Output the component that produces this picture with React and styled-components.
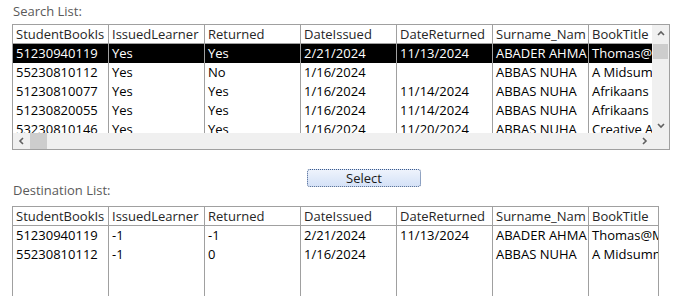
import React from 'react';
import styled, { createGlobalStyle } from 'styled-components';

const GlobalStyle = createGlobalStyle`
  html, body {
    margin: 0;
    padding: 0;
    background: #ffffff;
  }
  body {
    font-family: "Open Sans", "Liberation Sans", sans-serif;
    font-size: 13px;
    color: #000;
  }
`;

const columns = ['StudentBookIs', 'IssuedLearner', 'Returned', 'DateIssued', 'DateReturned', 'Surname_Nam', 'BookTitle'];

const searchRows = [
  ['51230940119', 'Yes', 'Yes', '2/21/2024', '11/13/2024', 'ABADER AHMA', 'Thomas@Midnight'],
  ['55230810112', 'Yes', 'No', '1/16/2024', '', 'ABBAS NUHA', 'A Midsummer'],
  ['51230810077', 'Yes', 'Yes', '1/16/2024', '11/14/2024', 'ABBAS NUHA', 'Afrikaans'],
  ['51230820055', 'Yes', 'Yes', '1/16/2024', '11/14/2024', 'ABBAS NUHA', 'Afrikaans'],
  ['53230810146', 'Yes', 'Yes', '1/16/2024', '11/20/2024', 'ABBAS NUHA', 'Creative Arts'],
];

const destRows = [
  ['51230940119', '-1', '-1', '2/21/2024', '11/13/2024', 'ABADER AHMA', 'Thomas@Midnight'],
  ['55230810112', '-1', '0', '1/16/2024', '', 'ABBAS NUHA', 'A Midsummer'],
];

const Page = styled.div`
  padding: 0 0 0 12px;
`;

const Caption = styled.div`
  height: 24px;
  line-height: 22px;
  padding-left: 1px;
  color: #5a5a5a;
  white-space: nowrap;
`;

const Frame = styled.div`
  width: ${p => p.width}px;
  height: ${p => p.height}px;
  border: 1px solid #a0a0a0;
  display: grid;
  grid-template-columns: 1fr ${p => (p.scroll ? '17px' : '0px')};
  grid-template-rows: 1fr ${p => (p.scroll ? '16px' : '0px')};
  overflow: hidden;
  box-sizing: content-box;
`;

const Sheet = styled.div`
  overflow: hidden;
  display: flex;
  flex-direction: column;
`;

const Row = styled.div`
  display: flex;
  height: ${p => (p.header ? 18 : 19)}px;
  flex: none;
  background: ${p => (p.selected ? '#000' : 'transparent')};
  color: ${p => (p.selected ? '#fff' : '#000')};
  border-bottom: ${p => (p.header ? '1px solid #a0a0a0' : 'none')};
`;

const Filler = styled.div`
  display: flex;
  flex: 1;
`;

const Cell = styled.div`
  flex: none;
  width: 96px;
  box-sizing: border-box;
  border-right: 1px solid #a0a0a0;
  padding: 0 3px;
  line-height: ${p => (p.header ? 18 : 19)}px;
  white-space: nowrap;
  overflow: hidden;
  color: ${p => (p.header ? '#262626' : 'inherit')};
`;

const VScroll = styled.div`
  background: #f0f0f0;
  display: flex;
  flex-direction: column;
  align-items: center;
`;

const HScroll = styled.div`
  grid-column: 1 / 3;
  background: #f0f0f0;
  display: flex;
  align-items: center;
`;

const Arrow = styled.div`
  width: 17px;
  height: ${p => (p.vertical ? '17px' : '16px')};
  display: flex;
  align-items: center;
  justify-content: center;
  flex: none;
`;

const Thumb = styled.div`
  background: #cdcdcd;
  flex: none;
  width: ${p => (p.vertical ? '15px' : '17px')};
  height: ${p => (p.vertical ? '15px' : '16px')};
  margin: ${p => (p.vertical ? '2px 0 0' : '0')};
`;

const Spacer = styled.div`
  flex: 1;
`;

const Middle = styled.div`
  display: grid;
  grid-template-columns: 295px auto;
  height: 56px;
`;

const DestCaption = styled(Caption)`
  align-self: end;
  line-height: 20px;
  height: 26px;
`;

const SelectButton = styled.button`
  align-self: start;
  justify-self: start;
  margin-top: 19px;
  width: 114px;
  height: 18px;
  padding: 0;
  border: 1px dotted #3d5a8a;
  border-radius: 3px;
  background: linear-gradient(#eef3fc, #d5e2f7);
  font-family: "Open Sans", "Liberation Sans", sans-serif;
  font-size: 13px;
  color: #1a1a1a;
  line-height: 16px;
`;

const Chevron = ({ dir }) => {
  const d = {
    up: 'M2 6 L5 3 L8 6',
    down: 'M2 4 L5 7 L8 4',
    left: 'M6 2 L3 5 L6 8',
    right: 'M4 2 L7 5 L4 8',
  }[dir];
  return (
    <svg width="10" height="10" viewBox="0 0 10 10">
      <path d={d} fill="none" stroke="#606060" strokeWidth="1.6" />
    </svg>
  );
};

const Grid = ({ rows, selected }) => (
  <Sheet>
    <Row header>
      {columns.map(c => (
        <Cell header key={c}>{c}</Cell>
      ))}
    </Row>
    {rows.map((r, i) => (
      <Row key={i} selected={i === selected}>
        {r.map((v, j) => (
          <Cell key={j}>{v}</Cell>
        ))}
      </Row>
    ))}
    <Filler>
      {columns.map(c => (
        <Cell key={c} />
      ))}
    </Filler>
  </Sheet>
);

const App = () => (
  <Page>
    <GlobalStyle />
    <Caption>Search List:</Caption>
    <Frame width={656} height={124} scroll>
      <Grid rows={searchRows} selected={0} />
      <VScroll>
        <Arrow vertical>
          <Chevron dir="up" />
        </Arrow>
        <Thumb vertical />
        <Spacer />
        <Arrow vertical>
          <Chevron dir="down" />
        </Arrow>
      </VScroll>
      <HScroll>
        <Arrow>
          <Chevron dir="left" />
        </Arrow>
        <Thumb />
        <Spacer />
        <Arrow>
          <Chevron dir="right" />
        </Arrow>
        <Arrow />
      </HScroll>
    </Frame>
    <Middle>
      <DestCaption>Destination List:</DestCaption>
      <SelectButton>Select</SelectButton>
    </Middle>
    <Frame width={645} height={140}>
      <Grid rows={destRows} selected={-1} />
    </Frame>
  </Page>
);

export default App;
